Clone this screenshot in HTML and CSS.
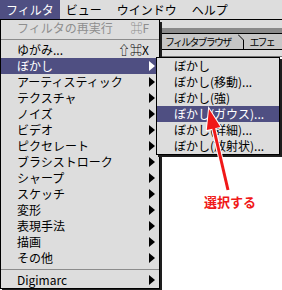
FILE: index.html
```html
<!DOCTYPE html>
<html lang="ja">
<head>
<meta charset="utf-8">
<link rel="stylesheet" href="styles.css">
</head>
<body>
<div class="screen">
  <div class="menubar">
    <span class="title active">フィルタ</span>
    <span class="title">ビュー</span>
    <span class="title wide">ウインドウ</span>
    <span class="title wide">ヘルプ</span>
  </div>
  <div class="window">
    <div class="win-top"></div>
    <div class="win-band"></div>
    <div class="tabs">
      <div class="tab first">フィルタブラウザ</div>
      <svg class="tab-edge" width="6" height="15" viewBox="0 0 6 15"><path d="M0 0.5 L5.5 6 V15" stroke="#000" stroke-width="1" fill="none"/></svg>
      <div class="tab second">エフェ</div>
    </div>
    <div class="win-gap"></div>
    <div class="win-body"></div>
  </div>

  <div class="menu main">
    <div class="item disabled"><span class="label">フィルタの再実行</span><span class="key">⌘F</span></div>
    <div class="sep"></div>
    <div class="item"><span class="label">ゆがみ...</span><span class="key">⇧⌘X</span></div>
    <div class="item hl"><span class="label">ぼかし</span><span class="arrow"></span></div>
    <div class="item"><span class="label">アーティスティック</span><span class="arrow"></span></div>
    <div class="item"><span class="label">テクスチャ</span><span class="arrow"></span></div>
    <div class="item"><span class="label">ノイズ</span><span class="arrow"></span></div>
    <div class="item"><span class="label">ビデオ</span><span class="arrow"></span></div>
    <div class="item"><span class="label">ピクセレート</span><span class="arrow"></span></div>
    <div class="item"><span class="label">ブラシストローク</span><span class="arrow"></span></div>
    <div class="item"><span class="label">シャープ</span><span class="arrow"></span></div>
    <div class="item"><span class="label">スケッチ</span><span class="arrow"></span></div>
    <div class="item"><span class="label">変形</span><span class="arrow"></span></div>
    <div class="item"><span class="label">表現手法</span><span class="arrow"></span></div>
    <div class="item"><span class="label">描画</span><span class="arrow"></span></div>
    <div class="item"><span class="label">その他</span><span class="arrow"></span></div>
    <div class="sep"></div>
    <div class="item"><span class="label">Digimarc</span><span class="arrow"></span></div>
  </div>

  <div class="menu sub">
    <div class="item"><span class="label">ぼかし</span></div>
    <div class="item"><span class="label">ぼかし(移動)...</span></div>
    <div class="item"><span class="label">ぼかし(強)</span></div>
    <div class="item hl"><span class="label">ぼかし(ガウス)...</span></div>
    <div class="item"><span class="label">ぼかし(詳細)...</span></div>
    <div class="item"><span class="label">ぼかし(放射状)...</span></div>
  </div>

  <svg class="pointer" width="282" height="290" viewBox="0 0 282 290">
    <g stroke="#fff" stroke-linejoin="miter">
      <line x1="228" y1="190" x2="213.6" y2="128" stroke-width="5"/>
      <polygon points="209,109 220.4,126.9 206.8,130.1" stroke-width="2" fill="#fff"/>
    </g>
    <line x1="228" y1="190" x2="213.6" y2="128" stroke="#f01818" stroke-width="3"/>
    <polygon points="209,109 220.4,126.9 206.8,130.1" fill="#f01818"/>
  </svg>
  <div class="callout">選択する</div>
</div>
</body>
</html>
```
FILE: styles.css
```css
* { box-sizing: border-box; }

body {
  margin: 0;
  width: 282px;
  height: 290px;
  overflow: hidden;
  background: #fff;
  font-family: "Noto Sans CJK JP", "DejaVu Sans", sans-serif;
  font-size: 12px;
  color: #000;
}

.screen {
  position: relative;
  width: 282px;
  height: 290px;
  overflow: hidden;
}

/* menubar */
.menubar {
  height: 20px;
  background: #dddddd;
  border-bottom: 1px solid #000;
  display: flex;
}
.title {
  padding: 0 6px;
  line-height: 19px;
  white-space: nowrap;
}
.title.wide { margin-left: 3px; }
.title.active {
  background: #4f4f82;
  color: #fff;
}

/* window behind the menus */
.window {
  display: flex;
  flex-direction: column;
  height: 270px;
}
.win-top { height: 8px; background: #dddddd; }
.win-band { height: 5px; background: #8a8a8a; }
.tabs {
  height: 17px;
  border-top: 1px solid #000;
  border-bottom: 1px solid #000;
  background: #c6c6c6;
  display: flex;
  align-items: stretch;
  padding-left: 165px;
  font-size: 10px;
  white-space: nowrap;
}
.tab {
  display: flex;
  align-items: center;
  letter-spacing: -1.8px;
}
.tab.first { padding-right: 8px; }
.tab.second { padding-left: 5px; }
.tab-edge { flex: none; display: block; }
.win-gap {
  height: 7px;
  background: #dddddd;
  border-bottom: 1px solid #777;
}
.win-body { flex: 1; background: #fff; }

/* menus */
.menu {
  position: absolute;
  background: #dddddd;
  border: 1px solid #000;
  box-shadow: 2px 2px 0 #1e1e1e;
}
.menu.main {
  left: 0;
  top: 20px;
  width: 160px;
  border-top: none;
}
.menu.sub {
  left: 156px;
  top: 57px;
  width: 124px;
}
.item {
  height: 16px;
  display: flex;
  align-items: center;
  padding: 0 4px 0 16px;
  white-space: nowrap;
  line-height: 16px;
}
.sub .item { padding-left: 17px; }
.label { flex: 1; }
.key { padding-right: 6px; }
.arrow {
  width: 0;
  height: 0;
  border-left: 6px solid #000;
  border-top: 5px solid transparent;
  border-bottom: 5px solid transparent;
}
.item.hl {
  background: #4f4f82;
  color: #fff;
}
.item.hl .arrow { border-left-color: #fff; }
.item.disabled { color: #8e8e8e; }

.sep {
  height: 6px;
  padding-top: 3px;
}
.sep::before {
  content: "";
  display: block;
  height: 1px;
  background: #8c8c8c;
}

/* annotation overlay */
.pointer {
  position: absolute;
  left: 0;
  top: 0;
  pointer-events: none;
}
.callout {
  position: absolute;
  left: 204px;
  top: 194px;
  color: #f01818;
  font-weight: bold;
  font-size: 13px;
  line-height: 16px;
  white-space: nowrap;
}
```
